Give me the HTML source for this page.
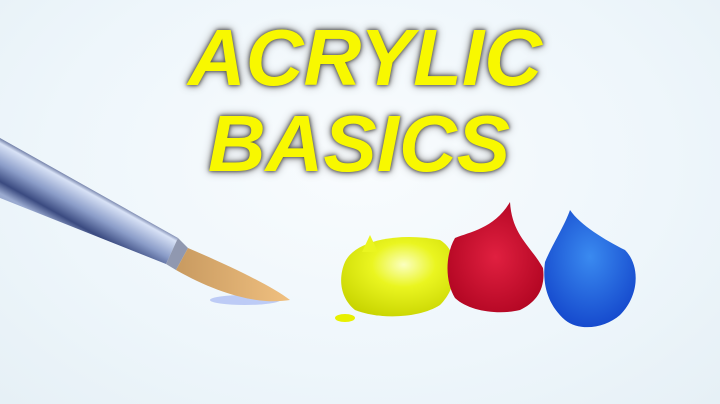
<!DOCTYPE html>
<html><head><style>
body{margin:0;width:720px;height:404px;overflow:hidden;background:#eef6fb;}
.bg{position:absolute;inset:0;background:radial-gradient(ellipse at 50% 40%,#f9fcfe 0%,#eef6fb 60%,#e6f0f6 100%);}
.t{position:absolute;left:0;width:730px;text-align:center;font-family:"Liberation Sans",sans-serif;font-weight:bold;font-style:italic;font-size:80px;color:#f8f800;line-height:1;text-shadow:0 0 3px #555,0 0 6px #666,0 0 10px #999;}
</style></head><body>
<div class="bg"></div>
<div class="t" style="top:18px">ACRYLIC</div>
<div class="t" style="top:104px;left:-6px">BASICS</div>
<svg width="720" height="404" style="position:absolute;left:0;top:0">
<defs>
<linearGradient id="h" gradientUnits="userSpaceOnUse" x1="10" y1="140" x2="-15" y2="185"><stop offset="0" stop-color="#2a3a70"/><stop offset="0.15" stop-color="#d8e2f6"/><stop offset="0.5" stop-color="#8a9cc8"/><stop offset="0.8" stop-color="#3a4a80"/><stop offset="1" stop-color="#9aaad0"/></linearGradient>
<linearGradient id="br" x1="0" y1="0" x2="1" y2="0"><stop offset="0" stop-color="#c89a60"/><stop offset="1" stop-color="#f0c080"/></linearGradient>
<radialGradient id="y" cx="0.55" cy="0.35" r="0.7"><stop offset="0" stop-color="#fbffc0"/><stop offset="0.4" stop-color="#eaf520"/><stop offset="1" stop-color="#c8d400"/></radialGradient>
<radialGradient id="r" cx="0.5" cy="0.5" r="0.7"><stop offset="0" stop-color="#e02040"/><stop offset="1" stop-color="#a8001c"/></radialGradient>
<radialGradient id="b" cx="0.5" cy="0.4" r="0.7"><stop offset="0" stop-color="#3a8af0"/><stop offset="1" stop-color="#1040c8"/></radialGradient>
</defs>
<ellipse cx="245" cy="300" rx="35" ry="5" fill="#8aa0f0" opacity="0.5"/>
<polygon points="0,198 0,138 178,238 166,264" fill="url(#h)"/>
<polygon points="166,264 178,238 188,248 176,270" fill="#9098b0"/>
<path d="M176,270 L188,248 C230,266 270,285 290,300 C260,305 220,295 176,270Z" fill="url(#br)"/>
<path d="M345,262 C355,240 400,232 440,240 C460,252 460,285 440,305 C420,318 380,320 355,310 C340,298 338,278 345,262Z" fill="url(#y)"/>
<path d="M362,252 L370,235 L378,252Z" fill="#eaf520"/>
<ellipse cx="345" cy="318" rx="10" ry="4" fill="#e8f000"/>
<path d="M455,238 C470,232 495,228 510,202 C512,235 530,245 543,268 C546,290 535,303 520,310 C500,315 470,312 455,298 C445,282 445,255 455,238Z" fill="url(#r)"/>
<path d="M545,262 C552,245 565,225 570,210 C580,225 605,240 625,250 C640,265 640,295 620,315 C605,328 580,332 565,320 C548,305 542,285 545,262Z" fill="url(#b)"/>
</svg>
</body></html>
